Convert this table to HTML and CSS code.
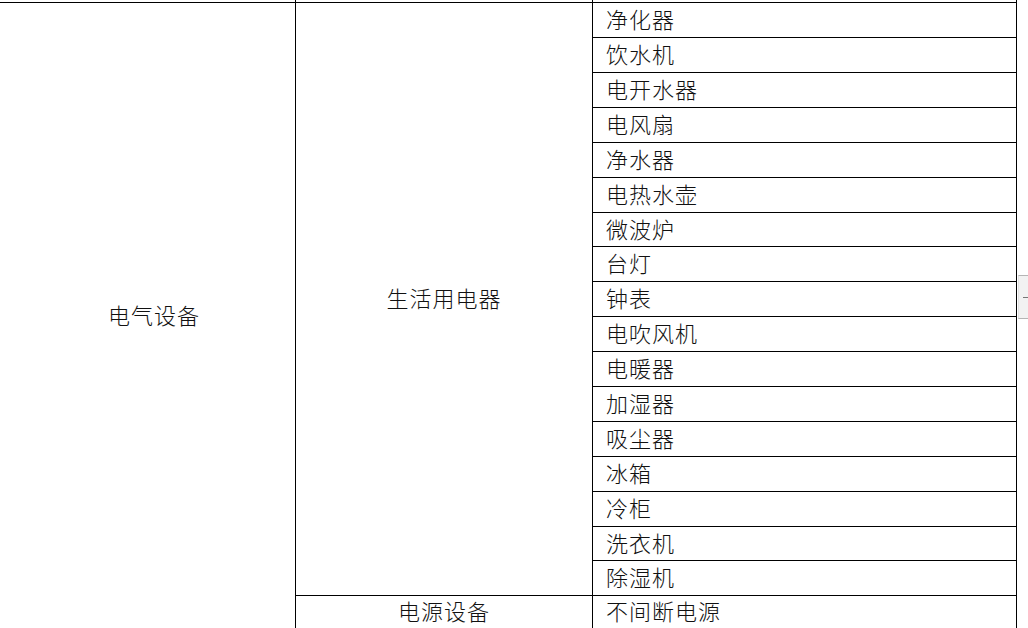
FILE: index.html
```html
<!DOCTYPE html>
<html lang="zh-CN">
<head>
<meta charset="utf-8">
<title>电气设备</title>
<link rel="stylesheet" href="styles.css">
</head>
<body>
<div class="sheet">
  <div class="cell strip"></div>
  <div class="cell strip"></div>
  <div class="cell strip"></div>

  <div class="cell group main">电气设备</div>
  <div class="cell group sub">生活用电器</div>

  <div class="cell item">净化器</div>
  <div class="cell item">饮水机</div>
  <div class="cell item">电开水器</div>
  <div class="cell item">电风扇</div>
  <div class="cell item">净水器</div>
  <div class="cell item">电热水壶</div>
  <div class="cell item">微波炉</div>
  <div class="cell item">台灯</div>
  <div class="cell item">钟表</div>
  <div class="cell item">电吹风机</div>
  <div class="cell item">电暖器</div>
  <div class="cell item">加湿器</div>
  <div class="cell item">吸尘器</div>
  <div class="cell item">冰箱</div>
  <div class="cell item">冷柜</div>
  <div class="cell item">洗衣机</div>
  <div class="cell item">除湿机</div>

  <div class="cell group">电源设备</div>
  <div class="cell item">不间断电源</div>
</div>
<div class="scroll-nub"><span class="nub-dash"></span></div>
</body>
</html>
```
FILE: styles.css
```css
html, body {
  margin: 0;
  padding: 0;
  background: #ffffff;
  overflow: hidden;
}

body {
  width: 1028px;
  height: 628px;
  position: relative;
  font-family: "Noto Sans CJK SC", "Noto Sans", sans-serif;
  font-weight: 300;
  font-size: 22px;
  color: #111;
}

.sheet {
  display: grid;
  grid-template-columns: 296px 297px 424px;
  grid-template-rows:
    3px 35px 35px 35px 35px 35px 35px 34px 35px 35px
    35px 35px 35px 35px 35px 35px 34px 35px 33px;
  width: 1017px;
}

.cell {
  box-sizing: border-box;
  border-right: 1px solid #000;
  border-bottom: 1px solid #000;
  display: flex;
  align-items: center;
  letter-spacing: 1px;
  line-height: 1;
  white-space: nowrap;
}

.strip {
  border-bottom: 1px solid #000;
}

.group {
  justify-content: center;
  padding-bottom: 5px;
}

.main {
  grid-row: span 18;
  border-bottom: none;
  padding-left: 13px;
  padding-bottom: 4px;
}

.sub {
  grid-row: span 17;
}

.item {
  padding-left: 13px;
  padding-bottom: 4px;
}

.scroll-nub {
  position: absolute;
  right: 0;
  top: 275px;
  width: 10px;
  height: 44px;
  box-sizing: border-box;
  background: #f2f2f2;
  border-top: 1px solid #b5b5b5;
  border-bottom: 1px solid #b5b5b5;
  border-left: 1px solid #e2e2e2;
}

.nub-dash {
  position: absolute;
  left: 4px;
  top: 21px;
  width: 5px;
  height: 1px;
  background: #777;
}
```
